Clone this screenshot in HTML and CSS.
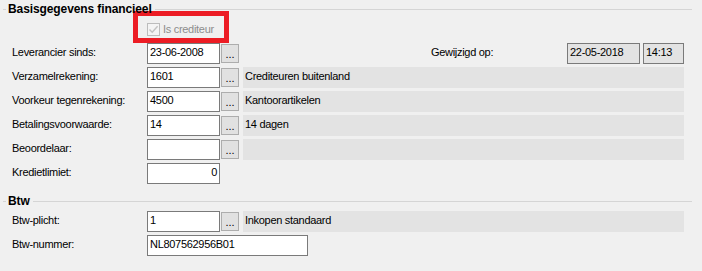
FILE: index.html
```html
<!DOCTYPE html>
<html lang="nl">
<head>
<meta charset="utf-8">
<title>Basisgegevens financieel</title>
<link rel="stylesheet" href="styles.css">
</head>
<body>
<div class="form">
  <div class="group-head">
    <span class="tick"></span><span class="title">Basisgegevens financieel</span><span class="rule"></span>
  </div>
  <div class="hl-row">
    <div class="highlight">
      <span class="chk"><svg width="11" height="11" viewBox="0 0 11 11"><path d="M1.5 5.5 L4.2 8.3 L9.6 2.2" fill="none" stroke="#c2c2c2" stroke-width="1.4"/></svg></span>
      <span class="chk-label">Is crediteur</span>
    </div>
  </div>
  <div class="grid">
    <div class="lbl">Leverancier sinds:</div>
    <div class="input">23-06-2008</div>
    <div class="btn">...</div>
    <div class="meta">
      <span class="meta-lbl">Gewijzigd op:</span>
      <span class="ro date">22-05-2018</span>
      <span class="ro time">14:13</span>
    </div>

    <div class="lbl">Verzamelrekening:</div>
    <div class="input">1601</div>
    <div class="btn">...</div>
    <div class="panel">Crediteuren buitenland</div>

    <div class="lbl">Voorkeur tegenrekening:</div>
    <div class="input">4500</div>
    <div class="btn">...</div>
    <div class="panel">Kantoorartikelen</div>

    <div class="lbl">Betalingsvoorwaarde:</div>
    <div class="input">14</div>
    <div class="btn">...</div>
    <div class="panel">14 dagen</div>

    <div class="lbl">Beoordelaar:</div>
    <div class="input"></div>
    <div class="btn">...</div>
    <div class="panel"></div>

    <div class="lbl">Kredietlimiet:</div>
    <div class="input num">0</div>
  </div>

  <div class="group-head second">
    <span class="tick"></span><span class="title">Btw</span><span class="rule"></span>
  </div>
  <div class="grid">
    <div class="lbl">Btw-plicht:</div>
    <div class="input">1</div>
    <div class="btn">...</div>
    <div class="panel">Inkopen standaard</div>

    <div class="lbl">Btw-nummer:</div>
    <div class="input wide">NL807562956B01</div>
  </div>
</div>
</body>
</html>
```

FILE: styles.css
```css
* {
  box-sizing: border-box;
}

html, body {
  margin: 0;
  padding: 0;
}

body {
  width: 702px;
  height: 271px;
  overflow: hidden;
  background: #f0f0f0;
  font-family: "Liberation Sans", Arial, sans-serif;
  font-size: 11px;
  letter-spacing: -0.3px;
  color: #000;
}

.form {
  padding-right: 10px;
}

.group-head {
  display: flex;
  align-items: center;
  height: 18px;
  margin-bottom: -7px;
}

.group-head.second {
  margin-top: 8px;
  margin-bottom: 1px;
}

.tick {
  width: 3px;
  height: 1px;
  margin-left: 3px;
  background: #d5d5d5;
}

.title {
  margin-left: 2px;
  font-size: 12px;
  font-weight: bold;
  letter-spacing: -0.1px;
  line-height: 18px;
}

.rule {
  flex: 1;
  height: 1px;
  margin-left: 3px;
  background: #d5d5d5;
}

.hl-row {
  height: 32px;
  padding-left: 133px;
}

.highlight {
  width: 96px;
  height: 32px;
  border: 5px solid #ec1c24;
  display: flex;
  align-items: flex-start;
  padding: 7px 0 0 9px;
}

.chk {
  width: 13px;
  height: 13px;
  border: 1px solid #bcbcbc;
  background: #f4f4f4;
  display: flex;
  align-items: center;
  justify-content: center;
}

.chk svg {
  display: block;
}

.chk-label {
  margin-left: 3px;
  line-height: 13px;
  color: #8d8d8d;
}

.grid {
  display: grid;
  grid-template-columns: 135px 74px 22px 441px;
  grid-auto-rows: 21px;
  row-gap: 3px;
  padding-left: 12px;
}

.lbl {
  line-height: 16px;
  padding-top: 1px;
  white-space: nowrap;
}

.input {
  width: 73px;
  height: 21px;
  border: 1px solid #7a7a7a;
  background: #fff;
  padding: 0 2px;
  line-height: 17px;
  white-space: nowrap;
}

.input.num {
  text-align: right;
}

.input.wide {
  width: 161px;
  grid-column: 2 / span 3;
}

.btn {
  width: 18px;
  height: 19px;
  margin-top: 1px;
  border: 1px solid #adadad;
  background: #e1e1e1;
  text-align: center;
  line-height: 17px;
  padding-top: 1px;
  letter-spacing: 0;
}

.panel {
  background: #e3e3e3;
  padding: 1px 0 0 2px;
  line-height: 16px;
  white-space: nowrap;
}

.meta {
  display: flex;
  align-items: flex-start;
}

.meta-lbl {
  margin-left: 188px;
  line-height: 16px;
  padding-top: 1px;
}

.ro {
  height: 21px;
  border: 1px solid #7a7a7a;
  background: #e3e3e3;
  padding: 0 2px;
  line-height: 17px;
}

.ro.date {
  width: 73px;
  margin-left: auto;
}

.ro.time {
  width: 41px;
  margin-left: 3px;
}
```
